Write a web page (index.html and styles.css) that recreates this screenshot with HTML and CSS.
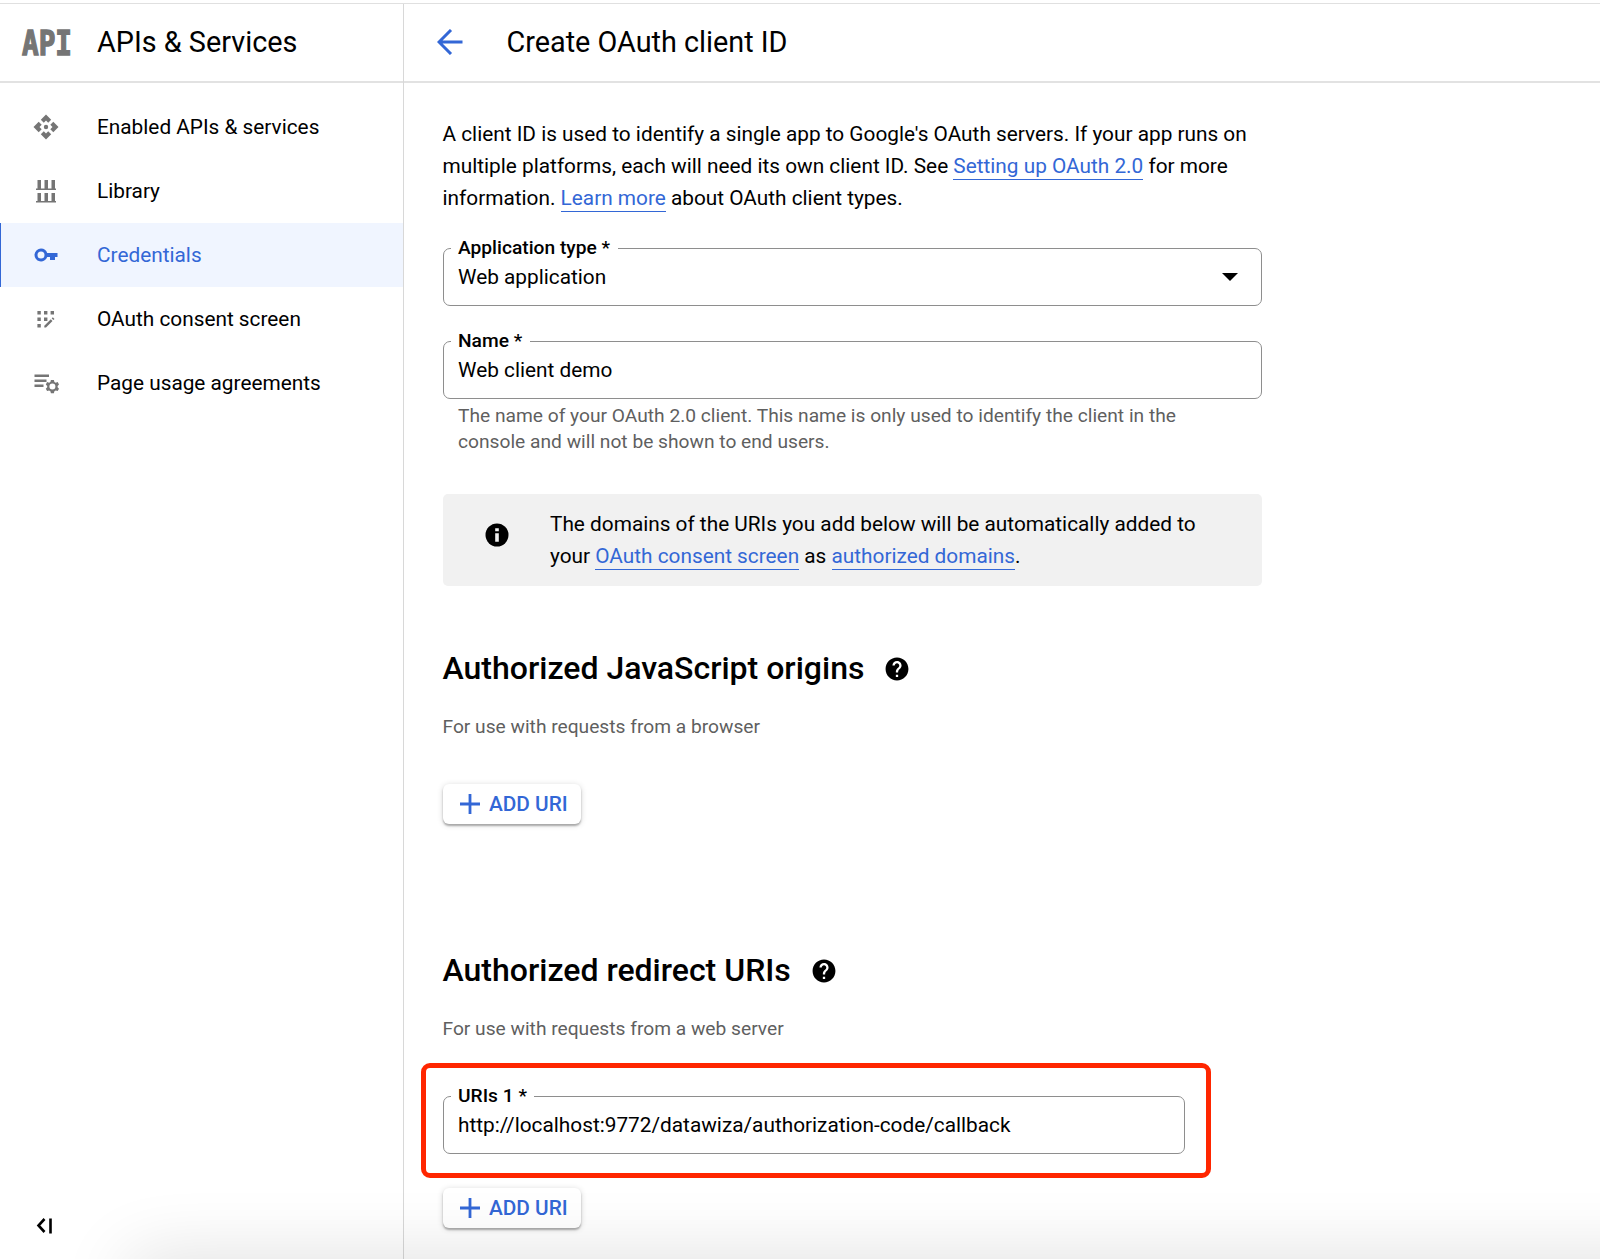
FILE: index.html
```html
<!DOCTYPE html>
<html lang="en">
<head>
    <meta charset="UTF-8">
    <title>Create OAuth client ID</title>
    <link rel="stylesheet" href="styles.css">
</head>
<body>
    <div class="page">
        <aside class="sidebar">
            <div class="sidebar-header">
                <svg class="api-logo" width="60" height="50" viewBox="0 0 60 50">
                    <text x="4" y="37.500" textLength="50" lengthAdjust="spacingAndGlyphs">API</text>
                </svg>
                <span>APIs &amp; Services</span>
            </div>
            <nav class="menu">
                <a class="menu-item">
                    <svg width="26" height="26" viewBox="0 0 26 26"><path d="M13 .5l5.200 5.200-3 3L13 6.500l-2.200 2.200-3-3zM13 25.500l5.200-5.200-3-3-2.200 2.200-2.200-2.200-3 3zM.5 13l5.200-5.200 3 3L6.500 13l2.200 2.200-3 3zM25.500 13l-5.200-5.200-3 3 2.200 2.200-2.200 2.200 3 3z"/><circle cx="13" cy="13" r="2.200"/></svg>
                    <span>Enabled APIs &amp; services</span>
                </a>
                <a class="menu-item">
                    <svg width="26" height="26" viewBox="0 0 26 26"><path d="M3 10.500h20v1.500H3zM3 23h20v1.500H3zM4.500 2H8v8.500H4.500zM11.500 2H15v8.500h-3.500zM18.500 2H22v8.500h-3.500zM4.500 15H8v8H4.500zM11.500 15H15v8h-3.500zM18.500 15H22v8h-3.500z"/></svg>
                    <span>Library</span>
                </a>
                <a class="menu-item active">
                    <svg width="26" height="26" viewBox="0 0 26 26"><path fill-rule="evenodd" d="M8 6.500a6.500 6.500 0 1 0 6.200 8.500H17v3h5v-3h2.500v-4H14.200A6.500 6.500 0 0 0 8 6.500zM8 9.500a3.500 3.500 0 1 1 0 7 3.500 3.500 0 0 1 0-7z"/></svg>
                    <span>Credentials</span>
                </a>
                <a class="menu-item">
                    <svg width="26" height="26" viewBox="0 0 26 26"><path d="M4.400 5h3.400v3.400H4.400zM11 5h3.400v3.400H11zM17.600 5H21v3.400h-3.400zM4.400 11.600h3.400V15H4.400zM11 11.600h3.400V15H11zM4.400 18h3.400v3.400H4.400zM11.300 19.800l6.500-6.500 1.700 1.700-6.500 6.500h-1.700zM18.700 12.400l1.100-1.100 1.700 1.700-1.100 1.100z"/></svg>
                    <span>OAuth consent screen</span>
                </a>
                <a class="menu-item">
                    <svg width="26" height="26" viewBox="0 0 26 26">
                        <path d="M1.500 4.500h14.500V7H1.500zM1.500 9.500h12V12h-12zM1.500 14.500h9V17h-9z"/>
                        <path fill-rule="evenodd" d="M17.900 10h3l.5 2 1.300.7 2-.6 1.300 2.400-1.400 1.500v1.200l1.400 1.500-1.300 2.400-2-.6-1.300.7-.5 2h-3l-.5-2-1.300-.7-2 .6-1.300-2.400 1.400-1.500V16l-1.400-1.500 1.300-2.400 2 .6 1.300-.7zM19.400 13.600a3 3 0 1 0 0 6 3 3 0 0 0 0-6z"/>
                    </svg>
                    <span>Page usage agreements</span>
                </a>
            </nav>
            <svg class="collapse" width="17" height="16" viewBox="0 0 17 16"><path d="M8.500 1L2.500 7.500l6 6.500M14.500 .5v15"/></svg>
        </aside>

        <main class="main">
            <header class="main-header">
                <svg class="back" width="26" height="26" viewBox="0 0 26 26"><path d="M25.500 13H2M14 1L2 13l12 12"/></svg>
                <span>Create OAuth client ID</span>
            </header>

            <div class="content">
                <p class="intro">A client ID is used to identify a single app to Google's OAuth servers. If your app runs on<br>
                multiple platforms, each will need its own client ID. See <a>Setting up OAuth 2.0</a> for more<br>
                information. <a>Learn more</a> about OAuth client types.</p>

                <fieldset class="field">
                    <legend>Application type *</legend>
                    <span>Web application</span>
                    <i class="arrow"></i>
                </fieldset>

                <fieldset class="field name-field">
                    <legend>Name *</legend>
                    <span>Web client demo</span>
                </fieldset>
                <p class="hint">The name of your OAuth 2.0 client. This name is only used to identify the client in the<br>
                console and will not be shown to end users.</p>

                <div class="info">
                    <svg width="24" height="24" viewBox="0 0 24 24"><circle cx="12" cy="12" r="11.500"/><path class="mark" d="M10.200 5.200h3.600v3h-3.600zM10.200 10.200h3.600v8.600h-3.600z"/></svg>
                    <p>The domains of the URIs you add below will be automatically added to<br>
                    your <a>OAuth consent screen</a> as <a>authorized domains</a>.</p>
                </div>

                <section class="origins">
                    <h2>Authorized JavaScript origins
                        <svg class="help" width="24" height="24" viewBox="1.500 1.500 21 21"><path d="M12 2C6.480 2 2 6.480 2 12s4.480 10 10 10 10-4.480 10-10S17.520 2 12 2zm1 17h-2v-2h2v2zm2.070-7.750l-.9.920C13.450 12.900 13 13.500 13 15h-2v-.5c0-1.100.45-2.100 1.170-2.830l1.240-1.260c.37-.36.590-.86.590-1.410 0-1.100-.9-2-2-2s-2 .9-2 2H8c0-2.210 1.790-4 4-4s4 1.790 4 4c0 .88-.36 1.680-.93 2.250z"/></svg>
                    </h2>
                    <p class="sub">For use with requests from a browser</p>
                    <button class="add"><svg width="20" height="20" viewBox="0 0 20 20"><path d="M10 0v20M0 10h20"/></svg>ADD URI</button>
                </section>

                <section class="redirects">
                    <h2>Authorized redirect URIs
                        <svg class="help" width="24" height="24" viewBox="1.500 1.500 21 21"><path d="M12 2C6.480 2 2 6.480 2 12s4.480 10 10 10 10-4.480 10-10S17.520 2 12 2zm1 17h-2v-2h2v2zm2.070-7.750l-.9.920C13.450 12.900 13 13.500 13 15h-2v-.5c0-1.100.45-2.100 1.170-2.830l1.240-1.260c.37-.36.590-.86.590-1.410 0-1.100-.9-2-2-2s-2 .9-2 2H8c0-2.210 1.790-4 4-4s4 1.790 4 4c0 .88-.36 1.680-.93 2.250z"/></svg>
                    </h2>
                    <p class="sub">For use with requests from a web server</p>
                    <div class="highlight">
                        <fieldset class="field">
                            <legend>URIs 1 *</legend>
                            <span>http://localhost:9772/datawiza/authorization-code/callback</span>
                        </fieldset>
                    </div>
                    <button class="add"><svg width="20" height="20" viewBox="0 0 20 20"><path d="M10 0v20M0 10h20"/></svg>ADD URI</button>
                </section>
            </div>
        </main>
        <div class="bottom-shadow"></div>
    </div>
</body>
</html>
```

FILE: styles.css
```css
* {
    box-sizing: border-box;
}

body {
    margin: 0;
    font-family: Roboto, "Liberation Sans", sans-serif;
    font-size: 20.8px;
    color: #000;
    background: #fff;
}

p, h2 {
    margin: 0;
}

svg {
    flex: none;
}

.page {
    position: relative;
    display: flex;
    height: 1259px;
    padding-top: 3px;
    overflow: hidden;
}

.page::before {
    content: "";
    position: absolute;
    top: 3px;
    left: 0;
    right: 0;
    height: 1px;
    background: #e0e0e0;
}

/* Sidebar */
.sidebar {
    display: flex;
    flex-direction: column;
    width: 404px;
    flex: none;
    border-right: 1px solid #d8d8d8;
}

.sidebar-header,
.main-header {
    display: flex;
    align-items: center;
    height: 80px;
    border-bottom: 2px solid #e2e2e2;
    font-size: 28.8px;
}

.sidebar-header {
    padding-left: 18px;
    gap: 19px;
}

.api-logo {
    fill: #757575;
    stroke: #757575;
    stroke-width: 1.4;
    font: bold 34px "DejaVu Sans Mono", monospace;
}

.menu {
    padding-top: 12px;
}

.menu-item {
    display: flex;
    align-items: center;
    height: 64px;
    padding-left: 33px;
}

.menu-item span {
    margin-left: auto;
    width: 306px;
}

.menu-item svg {
    fill: #757575;
}

.menu-item.active {
    padding-left: 32px;
    border-left: 1px solid #3367d6;
    background: #f0f5ff;
    color: #3367d6;
}

.menu-item.active svg {
    fill: #3367d6;
}

.collapse {
    margin: auto 0 25px 36px;
    fill: none;
    stroke: #000;
    stroke-width: 2.6;
}

/* Main column */
.main {
    flex: 1;
}

.main-header {
    padding-left: 32.5px;
    gap: 44px;
}

.back {
    fill: none;
    stroke: #3367d6;
    stroke-width: 3;
}

.content {
    width: 858px;
    padding: 35px 0 0 38.5px;
}

.intro,
.info p {
    line-height: 32px;
    white-space: nowrap;
}

a {
    color: inherit;
}

p a {
    color: #3367d6;
    border-bottom: 1px solid #3367d6;
    padding-bottom: 1px;
}

.field {
    display: flex;
    align-items: center;
    position: relative;
    height: 69px;
    margin: 23px 0 0;
    padding: 0 15px 11px 14.5px;
    border: 1px solid #8e8e8e;
    border-radius: 7px;
}

.name-field {
    margin-top: 24px;
}

.field legend {
    margin-left: -7.5px;
    padding: 0 7.5px;
    font-size: 19.2px;
    font-weight: 500;
    line-height: 22px;
}

.arrow {
    margin-left: auto;
    margin-right: 8px;
    border: 8px solid transparent;
    border-top-color: #000;
    border-bottom: 0;
}

.hint,
.sub {
    font-size: 19.2px;
    color: #5f5f5f;
}

.hint {
    padding: 4px 0 0 15.5px;
    line-height: 25.6px;
    white-space: nowrap;
}

.info {
    display: flex;
    align-items: center;
    gap: 41.5px;
    height: 92px;
    margin-top: 40px;
    padding-left: 42px;
    border-radius: 5px;
    background: #f1f1f1;
}

.info svg {
    margin-top: -10px;
}

.info .mark {
    fill: #f1f1f1;
}

/* URI sections */
h2 {
    display: flex;
    align-items: center;
    gap: 21px;
    height: 40px;
    font-size: 32px;
    font-weight: 500;
}

.help {
    margin-top: 1px;
}

.origins {
    height: 302px;
    margin-top: 62px;
}

.sub {
    margin-top: 25.5px;
    line-height: 26px;
}

.add {
    display: flex;
    align-items: center;
    gap: 9.5px;
    width: 138px;
    height: 40px;
    margin-top: 44.5px;
    padding: 0 0 0 17px;
    border: 0;
    border-radius: 6px;
    background: #fff;
    box-shadow: 0 2px 2px rgba(0, 0, 0, .28), 0 1px 6px rgba(0, 0, 0, .16);
    color: #3367d6;
    font-family: inherit;
    font-size: 20.8px;
    font-weight: 500;
    white-space: nowrap;
}

.add svg {
    stroke: #3367d6;
    stroke-width: 2.8;
}

.highlight {
    width: 790px;
    height: 115px;
    margin: 21.5px 0 0 -21.5px;
    padding: 17px 21px 0 16.5px;
    border: 5px solid #ff2600;
    border-radius: 9px;
}

.highlight .field {
    margin: 0;
}

.highlight + .add {
    margin-top: 10px;
}

/* Soft shade cast upwards from below the window edge */
.bottom-shadow {
    position: absolute;
    top: 100%;
    left: 130px;
    right: -100px;
    height: 60px;
    box-shadow: 0 0 72px rgba(0, 0, 0, .14);
    pointer-events: none;
}
```
